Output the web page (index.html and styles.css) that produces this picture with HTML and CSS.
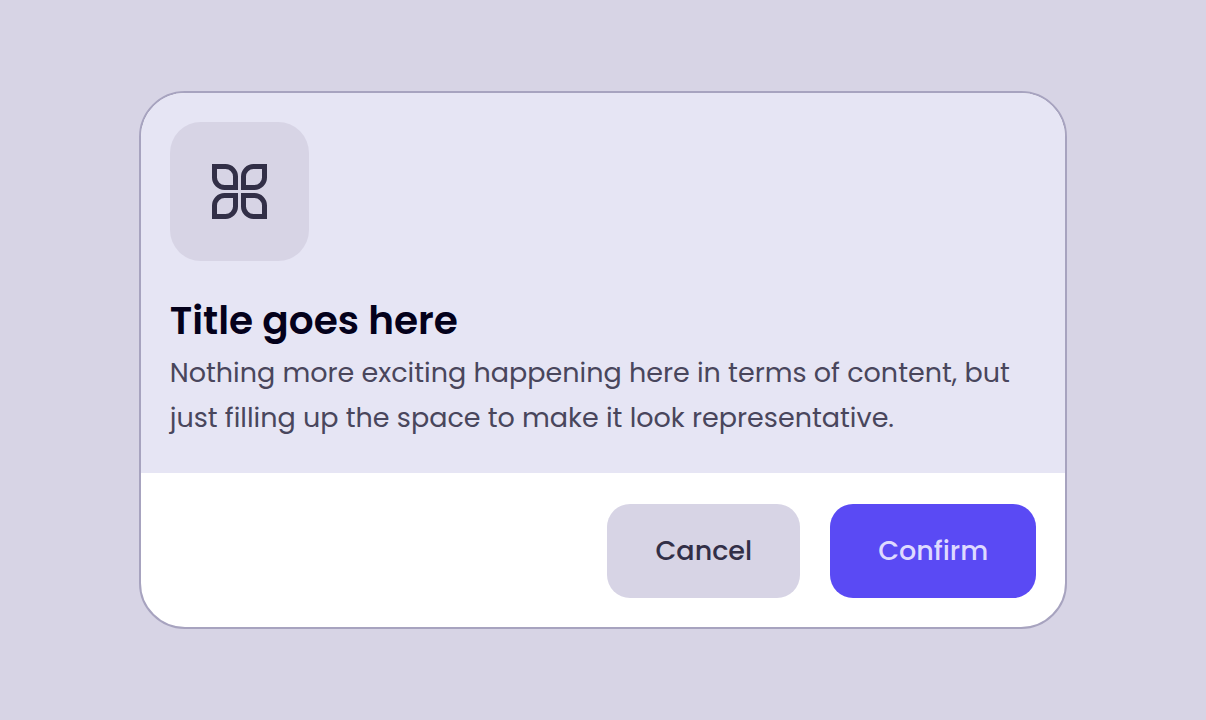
FILE: index.html
```html
<!DOCTYPE html>
<html lang="en">
<head>
    <meta charset="UTF-8">
    <meta name="viewport" content="width=device-width, initial-scale=1.0">
    <title>Dialog</title>
    <link rel="stylesheet" href="styles.css">
</head>
<body>
    <div class="modal" role="dialog" aria-labelledby="modal-title" aria-describedby="modal-text">
        <div class="modal-content">
            <div class="modal-icon">
                <svg width="55" height="55" viewBox="0 0 55 55" fill="none" stroke="currentColor" stroke-width="5" aria-hidden="true">
                    <path d="M2.5 2.5H13.5A10 10 0 0 1 23.5 12.5V23.5H12.5A10 10 0 0 1 2.5 13.5Z"/>
                    <path d="M52.5 2.5H41.5A10 10 0 0 0 31.5 12.5V23.5H42.5A10 10 0 0 0 52.5 13.5Z"/>
                    <path d="M2.5 52.5H13.5A10 10 0 0 0 23.5 42.5V31.5H12.5A10 10 0 0 0 2.5 41.5Z"/>
                    <path d="M52.5 52.5H41.5A10 10 0 0 1 31.5 42.5V31.5H42.5A10 10 0 0 1 52.5 41.5Z"/>
                </svg>
            </div>
            <h2 id="modal-title">Title goes here</h2>
            <p id="modal-text">Nothing more exciting happening here in terms of content, but just filling up the space to make it look representative.</p>
        </div>
        <div class="modal-actions">
            <button type="button" class="button cancel">Cancel</button>
            <button type="button" class="button confirm">Confirm</button>
        </div>
    </div>
</body>
</html>
```
FILE: styles.css
```css
* {
    box-sizing: border-box;
}
body {
    display: flex;
    align-items: center;
    justify-content: center;
    min-height: 100vh;
    margin: 0;
    background: #d7d4e5;
    font-family: Poppins, Inter, sans-serif;
}
.modal {
    width: 77%;
    overflow: hidden;
    background: white;
    border: 2px solid #a7a3bf;
    border-radius: 46px;
}
.modal-content {
    padding: 29px 29px 33px;
    background: #e6e5f4;
}
.modal-icon {
    display: flex;
    align-items: center;
    justify-content: center;
    width: 139px;
    height: 139px;
    margin-bottom: 31px;
    background: #d7d4e5;
    border-radius: 31px;
    color: #322f47;
}
.modal-content h2 {
    margin: 0;
    color: #04011b;
    font-size: 39px;
    font-weight: 600;
    line-height: 58px;
}
.modal-content p {
    margin: 0;
    color: #49465c;
    font-size: 27px;
    line-height: 45px;
}
.modal-actions {
    display: flex;
    justify-content: flex-end;
    gap: 30px;
    padding: 31px 29px 29px;
}
.button {
    padding: 26px 48px;
    border: none;
    border-radius: 23px;
    font-family: inherit;
    font-size: 27px;
    font-weight: 500;
    line-height: 42px;
    cursor: pointer;
}
.cancel {
    background: #d7d4e5;
    color: #322f47;
}
.confirm {
    background: #5a4af4;
    color: #dedaff;
}
```
